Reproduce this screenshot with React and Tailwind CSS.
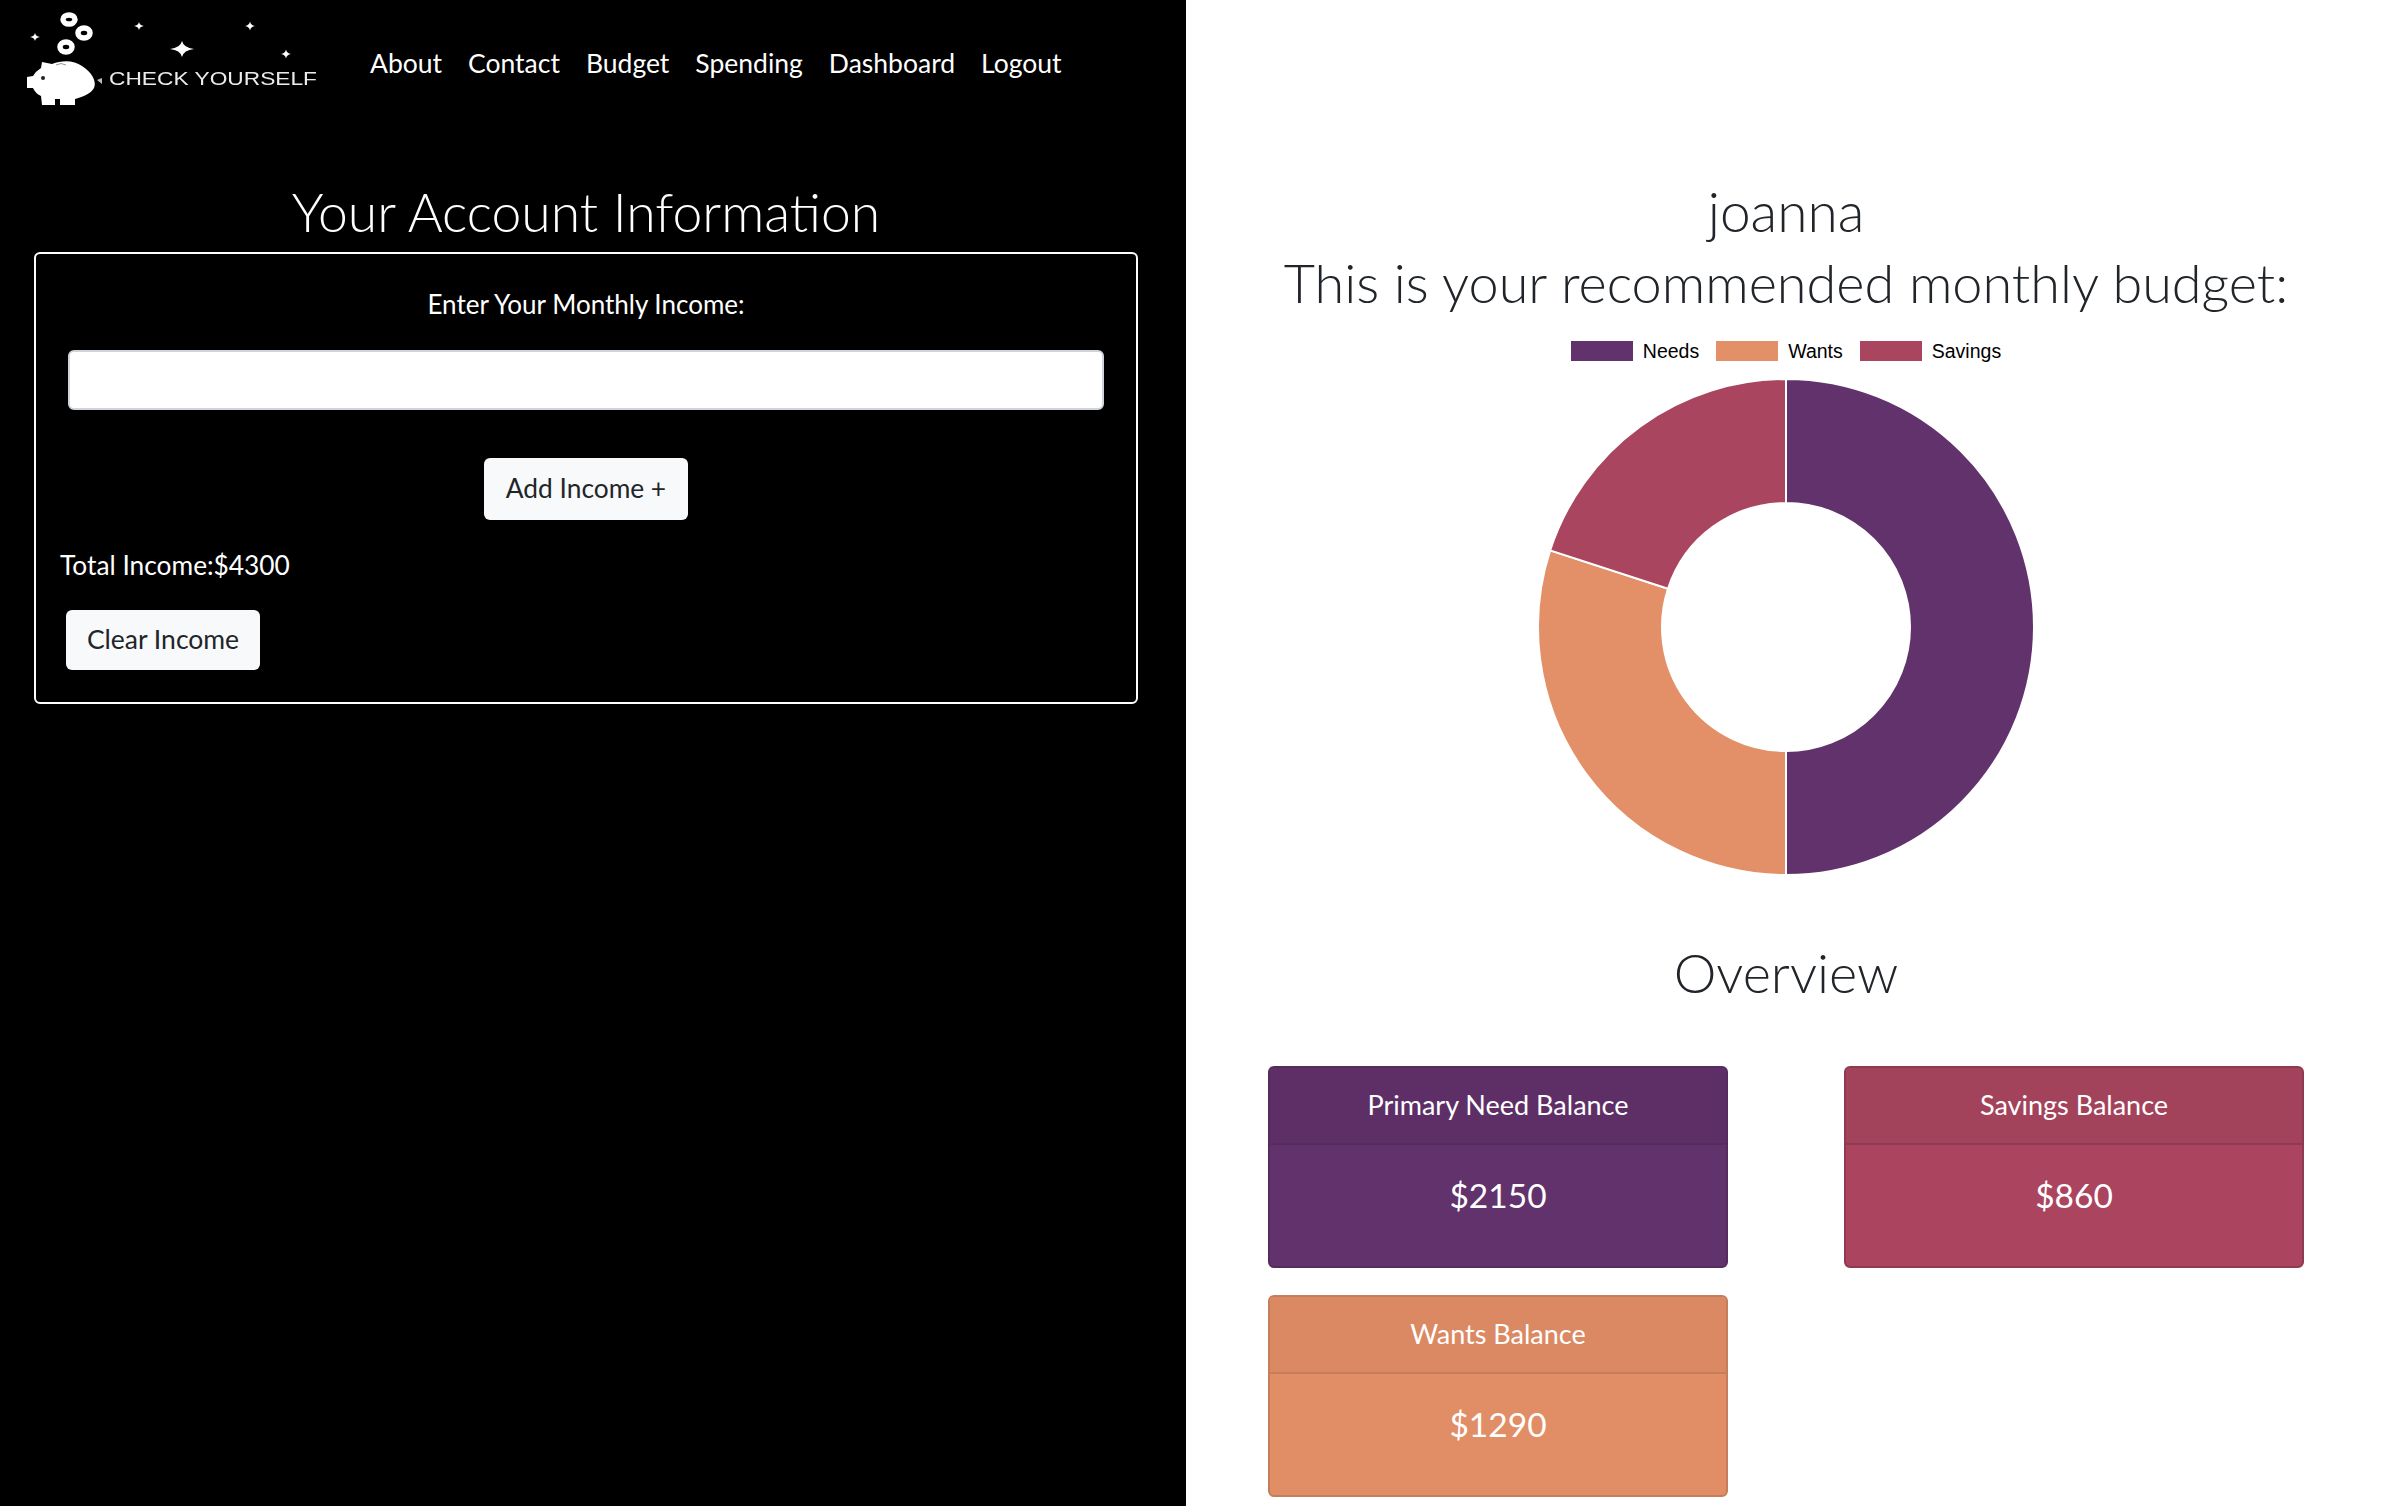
const Star = ({ x, y, r, h = r }) => (
  <path
    d={`M${x} ${y - h} Q${x + r * 0.14} ${y - h * 0.14} ${x + r} ${y} Q${x + r * 0.14} ${y + h * 0.14} ${x} ${y + h} Q${x - r * 0.14} ${y + h * 0.14} ${x - r} ${y} Q${x - r * 0.14} ${y - h * 0.14} ${x} ${y - h}Z`}
    fill="#fff"
  />
);

function Logo() {
  return (
    <svg width="340" height="130" viewBox="0 0 340 130" className="shrink-0 blur-[0.5px]">
      <g fill="none" stroke="#fff" strokeWidth="5.5">
        <ellipse cx="69" cy="19.5" rx="6" ry="4.5" />
        <ellipse cx="84" cy="33" rx="6" ry="5" />
        <ellipse cx="66" cy="47" rx="6" ry="5" />
      </g>
      <Star x={35} y={37} r={5} h={4} />
      <Star x={139} y={26} r={5} h={4} />
      <Star x={250} y={26} r={5} h={4.5} />
      <Star x={182} y={49} r={12} h={8} />
      <Star x={286} y={54} r={5} h={4.5} />
      <path
        d="M27 77 L33 76 Q36 71 41 68 L42 62 L52 64 C62 60 74 60 82 66 C92 72 97 82 94 88 C91 94 82 97 75 99 L75 105 L60 105 L60 99 L55 99 L55 105 L42 105 L41 96 Q35 93 33 88 L27 88Z"
        fill="#fff"
      />
      <circle cx="43" cy="78" r="2" fill="#222" />
      <path d="M56 65 Q61 62 66 65" fill="none" stroke="#999" strokeWidth="1" />
      <path d="M97 80 l5 -2 v6z" fill="#bbb" />
      <text
        x="109"
        y="85"
        fontFamily="'Liberation Sans', Arial, sans-serif"
        fontSize="17.5"
        fill="#ececec"
        textLength="208"
        lengthAdjust="spacingAndGlyphs"
      >
        CHECK YOURSELF
      </text>
    </svg>
  );
}

function Donut() {
  const cx = 250, cy = 250, R = 248, r = 124;
  const pt = (rad, f) => {
    const a = 2 * Math.PI * f - Math.PI / 2;
    return `${cx + rad * Math.cos(a)} ${cy + rad * Math.sin(a)}`;
  };
  const seg = (a, b, c) => (
    <path
      d={`M${pt(R, a)} A${R} ${R} 0 ${b - a > 0.5 ? 1 : 0} 1 ${pt(R, b)} L${pt(r, b)} A${r} ${r} 0 ${b - a > 0.5 ? 1 : 0} 0 ${pt(r, a)}Z`}
      fill={c}
      stroke="#fff"
      strokeWidth="2"
    />
  );
  return (
    <svg width="500" height="500" viewBox="0 0 500 500">
      {seg(0, 0.5, "#62326c")}
      {seg(0.5, 0.8, "#e38f67")}
      {seg(0.8, 1, "#a9455f")}
    </svg>
  );
}

function Legend() {
  const items = [
    ["Needs", "bg-[#62326c]"],
    ["Wants", "bg-[#e38f67]"],
    ["Savings", "bg-[#a9455f]"],
  ];
  return (
    <div className="flex justify-center gap-[17px] font-['Liberation_Sans',Arial,sans-serif] text-[19.5px] leading-[20px] text-black">
      {items.map(([t, c]) => (
        <div key={t} className="flex items-center gap-[10px]">
          <span className={`block h-[20px] w-[62px] ${c}`} />
          <span>{t}</span>
        </div>
      ))}
    </div>
  );
}

function Balance({ title, value, body, head, border }) {
  return (
    <div className={`flex h-[202px] flex-col overflow-hidden rounded-[6px] border-2 text-white ${body} ${border}`}>
      <div className={`flex h-[77px] items-center justify-center border-b-2 text-[27px] ${head} ${border}`}>{title}</div>
      <div className="flex flex-1 items-start justify-center pt-[28px] text-[33.5px] leading-[44px]">{value}</div>
    </div>
  );
}

export default function App() {
  return (
    <div className="grid h-[1506px] grid-cols-[1186px_1fr] overflow-hidden font-['Lato','Noto_Sans',sans-serif]">
      <div className="bg-black text-white">
        <nav className="flex h-[130px] items-start">
          <Logo />
          <div className="ml-[30px] mt-[44px] flex gap-[26px] text-[26.5px] leading-[38px]">
            {["About", "Contact", "Budget", "Spending", "Dashboard", "Logout"].map((t) => (
              <span key={t}>{t}</span>
            ))}
          </div>
        </nav>
        <div className="pl-[34px] pr-[48px]">
          <h3 className="mt-[47px] text-center text-[53.5px] font-light leading-[68px]">Your Account Information</h3>
          <div className="mt-[7px] h-[452px] rounded-[6px] border-2 border-white">
            <div className="pt-[31px] text-center text-[26px] leading-[38px]">Enter Your Monthly Income:</div>
            <div className="mx-[32px] mt-[27px] h-[60px] rounded-[6px] border-2 border-[#ced4da] bg-white" />
            <div className="mt-[48px] flex justify-center">
              <button className="h-[62px] w-[204px] rounded-[6px] bg-[#f8f9fa] text-[26.3px] text-[#212529]">Add Income +</button>
            </div>
            <div className="ml-[24px] mt-[26px] text-[26.3px] leading-[38px]">Total Income:$4300</div>
            <button className="ml-[30px] mt-[26px] h-[60px] w-[194px] rounded-[6px] bg-[#f8f9fa] text-[26.5px] text-[#212529]">Clear Income</button>
          </div>
        </div>
      </div>
      <div className="bg-white pl-[2px] text-[#212529]">
        <h3 className="mt-[177px] text-center text-[55px] font-light leading-[68px]">joanna</h3>
        <h3 className="mt-[4px] text-center text-[54px] font-light leading-[68px]">This is your recommended monthly budget:</h3>
        <div className="mt-[24px]"><Legend /></div>
        <div className="mt-[16px] flex justify-center"><Donut /></div>
        <h3 className="mt-[62px] text-center text-[54px] font-light leading-[68px]">Overview</h3>
        <div className="mx-[80px] mt-[59px] grid grid-cols-2 gap-x-[116px] gap-y-[27px]">
          <Balance title="Primary Need Balance" value="$2150" body="bg-[#62326c]" head="bg-[#5e2f66]" border="border-[#562b5e]" />
          <Balance title="Savings Balance" value="$860" body="bg-[#ab445e]" head="bg-[#a3435b]" border="border-[#8f3a50]" />
          <Balance title="Wants Balance" value="$1290" body="bg-[#e18e67]" head="bg-[#db8963]" border="border-[#c67d59]" />
        </div>
      </div>
    </div>
  );
}
